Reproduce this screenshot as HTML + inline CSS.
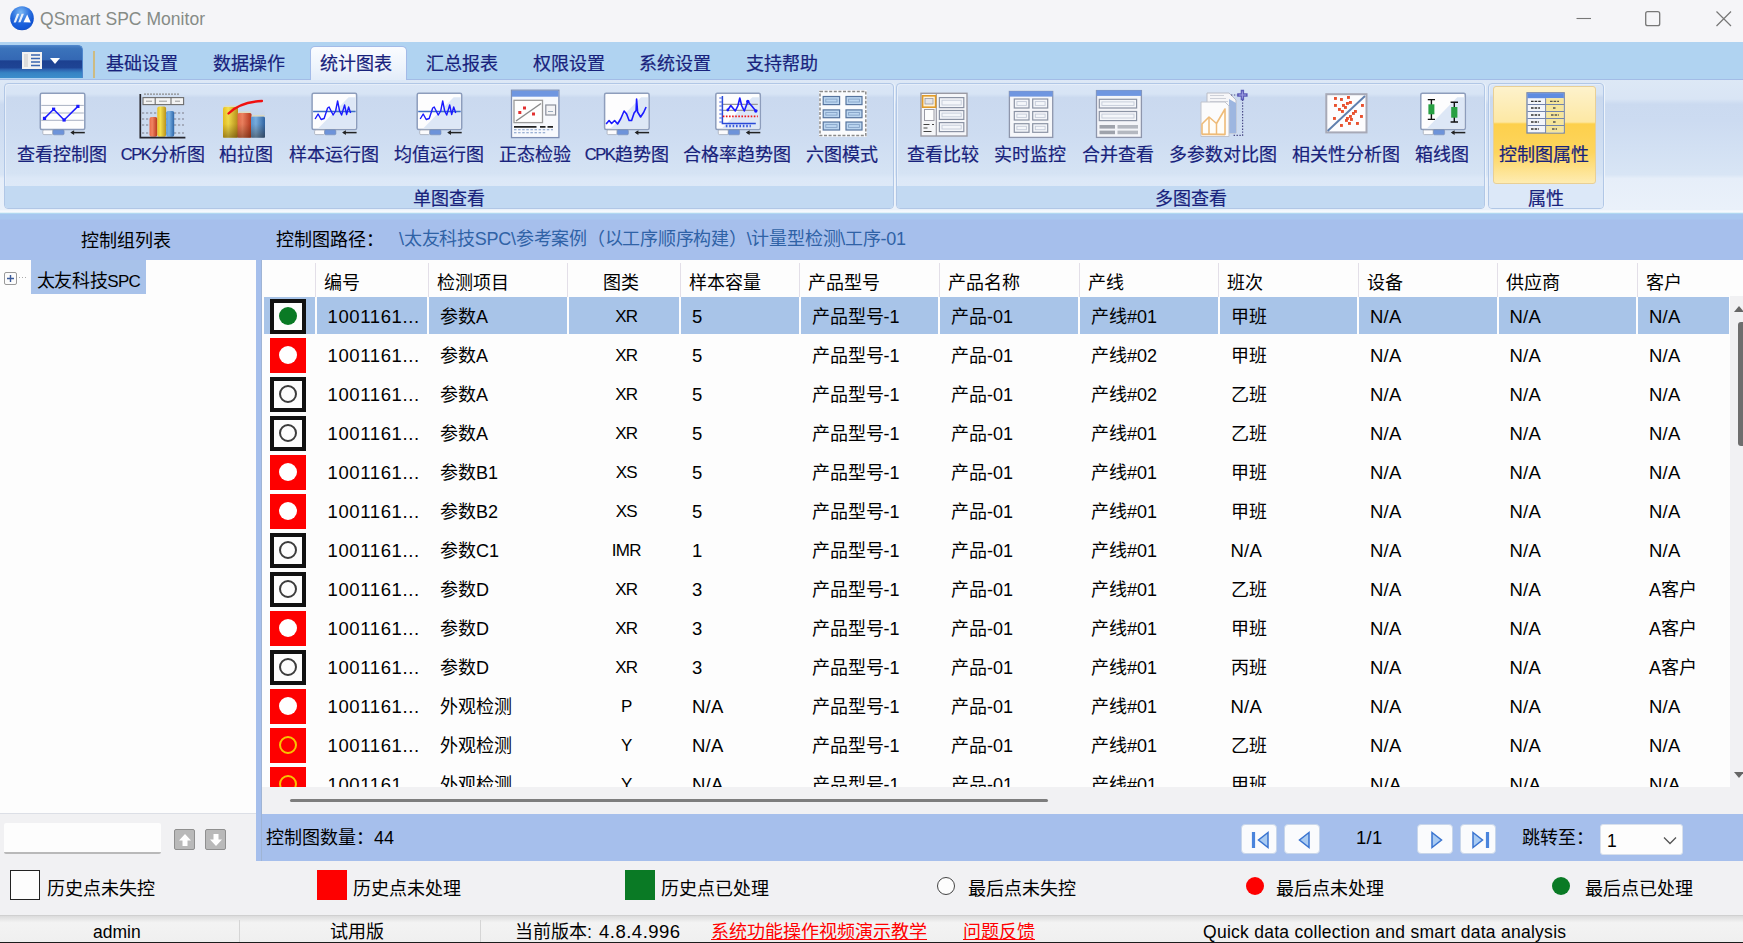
<!DOCTYPE html>
<html lang="zh-CN"><head><meta charset="utf-8"><title>QSmart SPC Monitor</title>
<style>
html,body{margin:0;padding:0}
body{width:1743px;height:943px;position:relative;overflow:hidden;background:#f1f1f3;font-family:"Liberation Sans",sans-serif;font-size:18px;color:#000}
div,span,a{position:absolute;white-space:nowrap;box-sizing:border-box}
svg{position:absolute;overflow:visible}
#title{left:0;top:0;width:1743px;height:42px;background:#f5f5f8}
#title .t{left:40px;top:9px;font-size:17.5px;color:#868b86;letter-spacing:0.04px}
#tabs{left:0;top:42px;width:1743px;height:38px;background:#b0d3f1;border-bottom:1px solid #a3bce6}
.tab{top:9px;height:27px;line-height:27px;font-size:18px;color:#18227c;-webkit-text-stroke:0.2px #18227c;text-align:center}
#tabsel{left:309.5px;top:3.5px;width:97.5px;height:34.5px;background:linear-gradient(#fafcff,#eef4fc 60%,#e2ecf9);border:1.5px solid #a3bbe8;border-bottom:none;border-radius:5px 5px 0 0}
#appbtn{left:0;top:3px;width:83px;height:33px;border-radius:0 5px 0 0;background:linear-gradient(#4a80c4 0%,#3b73bb 8%,#3468b4 44%,#1c4090 46%,#1e4494 68%,#2a5cac 72%,#3684c4 84%,#3c8ecc 100%);border:1px solid #4f86cc;border-left:none;border-bottom:none}
#ribbon{left:0;top:80px;width:1743px;height:135px;background:linear-gradient(#dde8f6 0%,#d9e5f5 14%,#cbdaf0 18%,#ccdbf1 30%,#d8e5f5 70%,#e6eef9 73%,#eaf1fa 96%,#f6f9fd 97%,#f6f9fd 98%,#b4def2 98.5%,#a9c5ec 100%)}
.grp{top:3px;height:126px;border:1px solid #b1c7e6;border-radius:4px;box-shadow:1px 0 0 #eef4fb, inset 1px 1px 0 #e6eef9;background:linear-gradient(#dae6f6 0%,#d7e4f5 8%,#cad9ef 11%,#cddcf1 40%,#d5e3f4 72%,#dce8f7 76%,#e0eaf8 100%)}
.grp .gl{left:0;right:0;bottom:-1.5px;height:21px;line-height:21px;text-align:center;color:#18227c;-webkit-text-stroke:0.2px #18227c;font-size:18px}
.rb{top:0;height:100px;text-align:center;color:#18227c;-webkit-text-stroke:0.2px #18227c;font-size:18px;letter-spacing:0}
.rb i{font-style:normal;font-size:16.5px;letter-spacing:-1.5px;position:relative;top:-1px;margin-right:1px}
.rb .lb{left:-60px;right:-60px;top:58.5px;height:24px;line-height:24px;text-align:center}
#pathbar{left:0;top:214px;width:1743px;height:46.5px;background:linear-gradient(#a8c6ef 0,#a8c6ef 5px,#a6bfec 6px,#a6bfec 100%);border-bottom:1px solid #a9abb6}
#left{left:0;top:260px;width:256px;height:553px;background:#fdfdfd}
#vsplit{left:256px;top:260px;width:6px;height:601px;background:#a6bfec;border-right:1px solid #9fb4d4}
#grid{left:262px;top:260px;width:1481px;height:553px;background:#fdfdfd;overflow:hidden}
.hd{top:9.5px;height:26px;line-height:26px;font-size:18px}
.hs{top:3px;width:1px;height:34px;background:#e3dfe8}
.row{left:0;width:1481px;height:39px}
.row.sel .c{background:#a8c4e8}
.c{top:1px;height:37px;line-height:41.5px;font-size:18px;padding-left:11px;overflow:hidden}
.c.l{font-size:18.5px;letter-spacing:0.2px;line-height:39.5px}
.c.id{font-size:18.5px;letter-spacing:0.62px;line-height:39.5px}
.c.ty{font-size:17px;letter-spacing:-0.8px;line-height:39.5px}
.c.ctr{padding-left:5px;text-align:center}
.ind{left:7.6px;top:2.5px;width:36.2px;height:35.5px}
.ind.bk{border:4px solid #111;background:#fdfdfd}
.ind.rd{background:#fe0000}
.dot{left:50%;top:50%;width:18px;height:18px;margin:-9px 0 0 -9px;border-radius:50%}
#hscroll{left:262px;top:787px;width:1481px;height:27px;background:#f1f1f3}
#countbar{left:262px;top:813.5px;width:1481px;height:47.5px;background:#a6bfec}
#leftbot{left:0;top:813px;width:256px;height:48px;background:#f1f1f3;border-top:1px solid #dcdfe6}
#legend{left:0;top:861px;width:1743px;height:54px;background:#f1f1f3}
#legend .lt{top:14.5px;height:26px;line-height:26px;font-size:18px}
#status{left:0;top:915px;width:1743px;height:28px;background:linear-gradient(#dcdcdc,#f3f3f3 25%,#efefef);border-top:1px solid #d0d0d0}
#status .st{top:4px;height:24px;line-height:24px;font-size:18px}
#status .la{font-size:17.5px}
.pg{top:10px;width:36px;height:30px;background:#fafbfd;border:1px solid #c8d6ea;border-radius:4px}
</style></head>
<body>
<div id="title"><svg style="left:10px;top:5.6px" width="24" height="24.4" viewBox="0 0 24 24.4"><defs><radialGradient id="ag" cx="45%" cy="25%" r="80%"><stop offset="0" stop-color="#7ab8f4"/><stop offset="0.45" stop-color="#2f74e0"/><stop offset="0.8" stop-color="#0d4fd0"/><stop offset="1" stop-color="#0a3aa8"/></radialGradient></defs><ellipse cx="12" cy="12.2" rx="11.8" ry="12" fill="url(#ag)"/><path d="M3.6 16.6L7 7.8h2.3L5.9 16.6zM8.2 16.6L11.6 7.8h2.3L10.5 16.6z" fill="#e8f0fc"/><path d="M13.4 16.6L17.2 8.6l3.6 8z" fill="#fdfdff"/><path d="M1.5 17.5Q12 14.5 22.5 17.5Q21 23.8 12 24Q3 23.8 1.5 17.5z" fill="#1a62e0" opacity="0.55"/></svg><span class="t">QSmart SPC Monitor</span><svg style="left:1570px;top:5px" width="170" height="30"><path d="M6.5 13.5h14.5" stroke="#777" stroke-width="1.1" fill="none"/><rect x="75.7" y="6.7" width="14" height="14" rx="2" fill="none" stroke="#777" stroke-width="1.3"/><path d="M146.5 6.5l14.5 14.5M161 6.5l-14.5 14.5" stroke="#777" stroke-width="1.2" fill="none"/></svg></div>
<div id="tabs"><div id="appbtn"><svg style="left:22px;top:6px" width="50" height="20"><rect x="0" y="0" width="20" height="17" fill="#f2f2f2"/><path d="M9 3h9M9 6.5h9M9 10h9M9 13.5h9" stroke="#3a66b0" stroke-width="1.6"/><rect x="2" y="2" width="4" height="13" fill="#dcdcdc"/><path d="M28 6h10l-5 6z" fill="#fff"/></svg></div><div style="left:93px;top:9px;width:2px;height:27px;background:#cdbb82"></div><div id="tabsel"></div><span class="tab" style="left:92px;width:100px">基础设置</span><span class="tab" style="left:199px;width:100px">数据操作</span><span class="tab" style="left:306px;width:100px">统计图表</span><span class="tab" style="left:412px;width:100px">汇总报表</span><span class="tab" style="left:519px;width:100px">权限设置</span><span class="tab" style="left:625px;width:100px">系统设置</span><span class="tab" style="left:732px;width:100px">支持帮助</span></div>
<div id="ribbon"><div class="grp" style="left:4px;width:890px"><div style="left:0;right:0;bottom:0;height:22px;background:#c2d9f2;border-radius:0 0 3px 3px"></div><div class="rb" style="left:37px;width:40px"><span class="lb">查看控制图</span></div><div class="rb" style="left:138px;width:40px"><span class="lb"><i>CPK</i>分析图</span></div><div class="rb" style="left:221px;width:40px"><span class="lb">柏拉图</span></div><div class="rb" style="left:309px;width:40px"><span class="lb">样本运行图</span></div><div class="rb" style="left:414px;width:40px"><span class="lb">均值运行图</span></div><div class="rb" style="left:510px;width:40px"><span class="lb">正态检验</span></div><div class="rb" style="left:602px;width:40px"><span class="lb"><i>CPK</i>趋势图</span></div><div class="rb" style="left:712px;width:40px"><span class="lb">合格率趋势图</span></div><div class="rb" style="left:817px;width:40px"><span class="lb">六图模式</span></div><span class="gl">单图查看</span></div><div class="grp" style="left:896px;width:589px"><div style="left:0;right:0;bottom:0;height:22px;background:#c2d9f2;border-radius:0 0 3px 3px"></div><div class="rb" style="left:26px;width:40px"><span class="lb">查看比较</span></div><div class="rb" style="left:113px;width:40px"><span class="lb">实时监控</span></div><div class="rb" style="left:201px;width:40px"><span class="lb">合并查看</span></div><div class="rb" style="left:306px;width:40px"><span class="lb">多参数对比图</span></div><div class="rb" style="left:429px;width:40px"><span class="lb">相关性分析图</span></div><div class="rb" style="left:525px;width:40px"><span class="lb">箱线图</span></div><span class="gl">多图查看</span></div><div class="grp" style="left:1488px;width:116px"><div style="left:0;right:0;bottom:0;height:22px;background:#dce8f8;border-radius:0 0 3px 3px"></div><div style="left:4px;top:2px;width:103px;height:97.5px;border-radius:3px;border:1px solid #e8cf96;background:linear-gradient(#fdf2cc 0%,#fde8a4 36.5%,#fdd04c 38.5%,#fdd55e 68%,#feecb2 100%)"></div><div class="rb" style="left:35px;width:40px"><span class="lb">控制图属性</span></div><span class="gl">属性</span></div></div>
<svg style="left:0;top:0" width="1743" height="220" viewBox="0 0 1743 220"><g transform="translate(0,0)"><path d="M144 94.2H180" stroke="#8a8a8a" stroke-width="1.3" stroke-dasharray="2 1"/><rect x="143" y="97.6" width="40.6" height="7" fill="#f3f3f3" stroke="#6e6e6e" stroke-width="1.1"/><path d="M155.2 97.6v7M171 97.6v7" stroke="#6e6e6e" stroke-width="1.1"/><path d="M146 101.2h6M159 101.2h8M175 101.2h5" stroke="#999" stroke-width="1"/><path d="M142 113H184M142 119H184M142 125H184M142 133H184" stroke="#7d7d88" stroke-width="1.1" stroke-dasharray="2.2 1.8"/><defs><linearGradient id="gr" x1="0" x2="1"><stop offset="0" stop-color="#e86a48"/><stop offset="0.35" stop-color="#f08462"/><stop offset="1" stop-color="#b8361c"/></linearGradient><linearGradient id="gy" x1="0" x2="1"><stop offset="0" stop-color="#e8c020"/><stop offset="0.35" stop-color="#f6e04c"/><stop offset="1" stop-color="#b8901a"/></linearGradient><linearGradient id="gb" x1="0" x2="1"><stop offset="0" stop-color="#5a98d8"/><stop offset="0.35" stop-color="#7ab2e6"/><stop offset="1" stop-color="#2e66a8"/></linearGradient></defs><rect x="149.5" y="117" width="7.8" height="19.8" rx="2" fill="url(#gr)"/><rect x="157.3" y="106.5" width="8.8" height="30.3" rx="2" fill="url(#gy)"/><rect x="166.2" y="111" width="8" height="25.8" rx="2" fill="url(#gb)"/><path d="M140.3 94V137.6H185.4" fill="none" stroke="#26262e" stroke-width="1.7"/></g><g transform="translate(40.3,0)"><rect x="0" y="93.3" width="44.5" height="36.2" rx="1.5" fill="#fdfdfe" stroke="#8d9dbc" stroke-width="1.5"/><path d="M1 105.4H43.5M1 113H43.5M1 120.3H43.5" stroke="#a9b1c2" stroke-width="1"/><path d="M4.2 118.4 L13.3 109.2 L23.8 120 L37.6 106.4" fill="none" stroke="#1a1aff" stroke-width="1.5"/><rect x="2.6" y="116.8" width="3.2" height="3.2" fill="#1a1aff"/><rect x="11.7" y="107.6" width="3.2" height="3.2" fill="#1a1aff"/><rect x="22.2" y="118.4" width="3.2" height="3.2" fill="#1a1aff"/><rect x="36" y="104.8" width="3.2" height="3.2" fill="#1a1aff"/><rect x="2.5" y="130" width="10" height="4.6" rx="1.2" fill="#fbfbfd" stroke="#a4abb8" stroke-width="0.8"/><rect x="12.6" y="129.8" width="11.2" height="5" rx="1.2" fill="#6d93da" stroke="#7b8db0" stroke-width="0.6"/><path d="M31.5 132.6H44.5" stroke="#222" stroke-width="1.5"/><path d="M30 132.6l3.8-2.3v4.6z" fill="#222"/></g><g transform="translate(0,0)"><rect x="223" y="107" width="15" height="30.7" rx="1.5" fill="url(#gy)"/><rect x="237.5" y="113" width="14" height="24.7" rx="1.5" fill="url(#gr)"/><rect x="251" y="116.5" width="14" height="21.2" rx="1.5" fill="url(#gb)"/><path d="M223 107l2-1.6h12l1 1.6zM237.5 113l2-1.4h11l1 1.4zM251 116.5l2-1.4h11l1 1.4z" fill="#f0e0a0" opacity="0.55"/><defs><linearGradient id="gd" x1="0" y1="0" x2="0" y2="1"><stop offset="0" stop-color="#402000" stop-opacity="0"/><stop offset="0.55" stop-color="#402000" stop-opacity="0.05"/><stop offset="1" stop-color="#301800" stop-opacity="0.42"/></linearGradient></defs><rect x="223" y="107" width="42" height="30.7" fill="url(#gd)"/><path d="M228.5 113.5Q240 102 262 101" fill="none" stroke="#f01010" stroke-width="2.3" stroke-linecap="round"/></g><g transform="translate(312.1,0)"><rect x="0" y="93.3" width="44.5" height="36.2" rx="1.5" fill="#fdfdfe" stroke="#8d9dbc" stroke-width="1.5"/><path d="M43.5 97.3 L43.5 128.5 L6 128.5 L36.5 97.3 Z" fill="#dde7f6"/><path d="M1 111.5H43.5" stroke="#3c6ec4" stroke-width="1.3"/><path d="M3 119 L6 114 L9 119.5 L12 118.5 L15.5 108 L17 107 L21 115 L23.5 111 L25.5 101 L27.5 111 L29.5 115 L32.5 105 L34.5 114.5 L36.5 107 L38.5 113" fill="none" stroke="#1a1aff" stroke-width="1.4" stroke-linejoin="round"/><rect x="2.5" y="130" width="10" height="4.6" rx="1.2" fill="#fbfbfd" stroke="#a4abb8" stroke-width="0.8"/><rect x="12.6" y="129.8" width="11.2" height="5" rx="1.2" fill="#6d93da" stroke="#7b8db0" stroke-width="0.6"/><path d="M31.5 132.6H44.5" stroke="#222" stroke-width="1.5"/><path d="M30 132.6l3.8-2.3v4.6z" fill="#222"/></g><g transform="translate(417.2,0)"><rect x="0" y="93.3" width="44.5" height="36.2" rx="1.5" fill="#fdfdfe" stroke="#8d9dbc" stroke-width="1.5"/><path d="M43.5 97.3 L43.5 128.5 L6 128.5 L36.5 97.3 Z" fill="#dde7f6"/><path d="M1 111.5H43.5" stroke="#3c6ec4" stroke-width="1.3"/><path d="M3 119 L6 114 L9 119.5 L12 118.5 L15.5 108 L17 107 L21 115 L23.5 111 L25.5 101 L27.5 111 L29.5 115 L32.5 105 L34.5 114.5 L36.5 107 L38.5 113" fill="none" stroke="#1a1aff" stroke-width="1.4" stroke-linejoin="round"/><rect x="2.5" y="130" width="10" height="4.6" rx="1.2" fill="#fbfbfd" stroke="#a4abb8" stroke-width="0.8"/><rect x="12.6" y="129.8" width="11.2" height="5" rx="1.2" fill="#6d93da" stroke="#7b8db0" stroke-width="0.6"/><path d="M31.5 132.6H44.5" stroke="#222" stroke-width="1.5"/><path d="M30 132.6l3.8-2.3v4.6z" fill="#222"/></g><g transform="translate(0,0)"><rect x="511.5" y="90.2" width="47.4" height="47.4" fill="#f7f9fd" stroke="#7e8fb4" stroke-width="1.3"/><rect x="512" y="90.7" width="46.4" height="6" fill="#6f96e0"/><rect x="514" y="100.3" width="28.5" height="22.3" fill="#fefefe" stroke="#9a9a9a" stroke-width="1.3"/><path d="M516 121L541 103.5" stroke="#8a8a8a" stroke-width="1.5"/><rect x="523" y="106.5" width="3" height="3" fill="#e23030"/><rect x="518.3" y="111" width="3" height="3" fill="#e23030"/><rect x="532" y="112.5" width="3" height="3" fill="#e23030"/><rect x="545.8" y="105" width="9.8" height="10" fill="#f4f4f6" stroke="#8a8f9c" stroke-width="1.2"/><path d="M548 111.5h5" stroke="#9ab" stroke-width="1"/><path d="M514 126.8H536.5M540 126.8H545.5M547.5 126.8H553" stroke="#222" stroke-width="1.7"/><path d="M514 129.8H553M514 132.8H546" stroke="#7f9bc8" stroke-width="1.1" stroke-dasharray="2.5 1.6"/></g><g transform="translate(604.6,0)"><rect x="0" y="93.3" width="44.5" height="36.2" rx="1.5" fill="#fdfdfe" stroke="#8d9dbc" stroke-width="1.5"/><path d="M43.5 97.3 L43.5 128.5 L6 128.5 L36.5 97.3 Z" fill="#dde7f6"/><path d="M1.5 124 L4.5 120.5 L7 123.5 L10 120.5 L13 124 L16 119 L19.5 111 L22 114 L24.5 120.5 L27 120.5 L29.5 113 L31.5 110.5 L32 99 L33 112 L36 117 L39 112.5 L41.5 107" fill="none" stroke="#1a1aff" stroke-width="1.6" stroke-linejoin="round"/><rect x="2.5" y="130" width="10" height="4.6" rx="1.2" fill="#fbfbfd" stroke="#a4abb8" stroke-width="0.8"/><rect x="12.6" y="129.8" width="11.2" height="5" rx="1.2" fill="#6d93da" stroke="#7b8db0" stroke-width="0.6"/><path d="M31.5 132.6H44.5" stroke="#222" stroke-width="1.5"/><path d="M30 132.6l3.8-2.3v4.6z" fill="#222"/></g><g transform="translate(715.8,0)"><rect x="0" y="93.3" width="44.5" height="36.2" rx="1.5" fill="#fdfdfe" stroke="#8d9dbc" stroke-width="1.5"/><path d="M43.5 97.3 L43.5 128.5 L6 128.5 L36.5 97.3 Z" fill="#dde7f6"/><path d="M6 104.4H42M6 110.3H42" stroke="#9a9a9a" stroke-width="1.2"/><path d="M6.6 96V123.6H40" fill="none" stroke="#2a4ad8" stroke-width="1.5"/><path d="M3.5 98H6M3.5 102H6M3.5 106H6M3.5 110H6M3.5 114H6M3.5 118H6M3.5 122H6" stroke="#3a5ae0" stroke-width="1.1"/><path d="M10 126H35" stroke="#3a5ae0" stroke-width="2.6" stroke-dasharray="1.6 1.8"/><path d="M12 110 L15 105.5 L19.5 111 L22 106 L24 98 L26 106 L28.5 111 L32 101.5 L36 106 L40 111" fill="none" stroke="#1a1aff" stroke-width="1.6" stroke-linejoin="round"/><circle cx="32" cy="101.5" r="1.7" fill="#1a1aff"/><circle cx="40" cy="111" r="1.7" fill="#1a1aff"/><circle cx="12" cy="110" r="1.4" fill="#1a1aff"/><path d="M7 116.4H42" stroke="#f01818" stroke-width="1.8" stroke-dasharray="1.6 1.5"/><rect x="2.5" y="130" width="10" height="4.6" rx="1.2" fill="#fbfbfd" stroke="#a4abb8" stroke-width="0.8"/><rect x="12.6" y="129.8" width="11.2" height="5" rx="1.2" fill="#6d93da" stroke="#7b8db0" stroke-width="0.6"/><path d="M31.5 132.6H44.5" stroke="#222" stroke-width="1.5"/><path d="M30 132.6l3.8-2.3v4.6z" fill="#222"/></g><g transform="translate(0,0)"><rect x="819" y="90.2" width="47.8" height="46.6" fill="#fafbfd"/><rect x="820" y="91.4" width="45.8" height="44.2" fill="none" stroke="#8a8a8a" stroke-width="1.5" stroke-dasharray="3 1.6"/><rect x="823.2" y="96.5" width="16.4" height="8.1" fill="#bcd6f0" stroke="#56749e" stroke-width="1.2"/><rect x="825.8" y="99.1" width="11.2" height="2.9" fill="none" stroke="#86a4c8" stroke-width="0.9"/><rect x="823.2" y="109.9" width="16.4" height="7.8" fill="#bcd6f0" stroke="#56749e" stroke-width="1.2"/><rect x="825.8" y="112.5" width="11.2" height="2.6" fill="none" stroke="#86a4c8" stroke-width="0.9"/><rect x="823.2" y="122" width="16.4" height="8" fill="#bcd6f0" stroke="#56749e" stroke-width="1.2"/><rect x="825.8" y="124.6" width="11.2" height="2.8" fill="none" stroke="#86a4c8" stroke-width="0.9"/><rect x="846" y="96.5" width="16" height="8.1" fill="#bcd6f0" stroke="#56749e" stroke-width="1.2"/><rect x="848.6" y="99.1" width="10.8" height="2.9" fill="none" stroke="#86a4c8" stroke-width="0.9"/><rect x="846" y="109.9" width="16" height="7.8" fill="#bcd6f0" stroke="#56749e" stroke-width="1.2"/><rect x="848.6" y="112.5" width="10.8" height="2.6" fill="none" stroke="#86a4c8" stroke-width="0.9"/><rect x="846" y="122" width="16" height="8" fill="#bcd6f0" stroke="#56749e" stroke-width="1.2"/><rect x="848.6" y="124.6" width="10.8" height="2.8" fill="none" stroke="#86a4c8" stroke-width="0.9"/></g><g transform="translate(0,0)"><rect x="921" y="93.3" width="46" height="42.7" fill="#f5f6f9" stroke="#9a9aa4" stroke-width="1.4"/><path d="M936.3 93.5V136" stroke="#9a9aa4" stroke-width="1.2"/><rect x="922.6" y="95.8" width="13" height="11.4" fill="#fdf2dc" stroke="#e09a28" stroke-width="1.6"/><rect x="925" y="98.5" width="8" height="5.5" fill="#e4e4e8" stroke="#9a9aa4" stroke-width="0.8"/><rect x="924.5" y="109.5" width="9.5" height="11" fill="#fdfdfd" stroke="#9a9aa4" stroke-width="1"/><path d="M923.5 124.5h6M932 124.5h2M923.5 128h4M923.5 131.5h8" stroke="#444" stroke-width="1.2"/><rect x="939.4" y="97.6" width="24.4" height="10" fill="#f4f6fa" stroke="#8b93a4" stroke-width="1.2"/><rect x="942" y="100.2" width="19.2" height="4.8" fill="none" stroke="#c3cad8" stroke-width="0.9"/><rect x="939.4" y="110.5" width="24.4" height="8.9" fill="#f4f6fa" stroke="#8b93a4" stroke-width="1.2"/><rect x="942" y="113.1" width="19.2" height="3.7" fill="none" stroke="#c3cad8" stroke-width="0.9"/><rect x="939.4" y="122.6" width="24.4" height="9" fill="#f4f6fa" stroke="#8b93a4" stroke-width="1.2"/><rect x="942" y="125.2" width="19.2" height="3.8" fill="none" stroke="#c3cad8" stroke-width="0.9"/></g><g transform="translate(0,0)"><rect x="1009.4" y="91.5" width="43.3" height="45.9" fill="#f6f7fa" stroke="#8e96ac" stroke-width="1.3"/><rect x="1009.4" y="91.2" width="43.3" height="5.4" fill="#6f96e0"/><rect x="1014.3" y="99" width="14.7" height="9" fill="#f4f6fa" stroke="#8b93a4" stroke-width="1.2"/><rect x="1016.9" y="101.6" width="9.5" height="3.8" fill="none" stroke="#c3cad8" stroke-width="0.9"/><rect x="1014.3" y="111.5" width="14.7" height="8.5" fill="#f4f6fa" stroke="#8b93a4" stroke-width="1.2"/><rect x="1016.9" y="114.1" width="9.5" height="3.3" fill="none" stroke="#c3cad8" stroke-width="0.9"/><rect x="1014.3" y="123.7" width="14.7" height="8.6" fill="#f4f6fa" stroke="#8b93a4" stroke-width="1.2"/><rect x="1016.9" y="126.3" width="9.5" height="3.4" fill="none" stroke="#c3cad8" stroke-width="0.9"/><rect x="1032.7" y="99" width="15" height="9" fill="#f4f6fa" stroke="#8b93a4" stroke-width="1.2"/><rect x="1035.3" y="101.6" width="9.8" height="3.8" fill="none" stroke="#c3cad8" stroke-width="0.9"/><rect x="1032.7" y="111.5" width="15" height="8.5" fill="#f4f6fa" stroke="#8b93a4" stroke-width="1.2"/><rect x="1035.3" y="114.1" width="9.8" height="3.3" fill="none" stroke="#c3cad8" stroke-width="0.9"/><rect x="1032.7" y="123.7" width="15" height="8.6" fill="#f4f6fa" stroke="#8b93a4" stroke-width="1.2"/><rect x="1035.3" y="126.3" width="9.8" height="3.4" fill="none" stroke="#c3cad8" stroke-width="0.9"/></g><g transform="translate(0,0)"><rect x="1096.5" y="90.6" width="44.9" height="46.8" fill="#f4f5f9" stroke="#8e96ac" stroke-width="1.3"/><rect x="1096.5" y="90.3" width="44.9" height="5.6" fill="#6f96e0"/><rect x="1099.3" y="99.3" width="37.3" height="8.7" fill="#f4f6fa" stroke="#8b93a4" stroke-width="1.2"/><rect x="1101.9" y="101.9" width="32.1" height="3.5" fill="none" stroke="#c3cad8" stroke-width="0.9"/><rect x="1099.3" y="111.5" width="37.3" height="9.1" fill="#f4f6fa" stroke="#8b93a4" stroke-width="1.2"/><rect x="1101.9" y="114.1" width="32.1" height="3.9" fill="none" stroke="#c3cad8" stroke-width="0.9"/><rect x="1099.5" y="125" width="15.5" height="3.6" fill="#9fa3ac"/><rect x="1117.5" y="125" width="20.5" height="3.6" fill="#b4b8c0"/><rect x="1099.5" y="130.6" width="15.5" height="3.6" fill="#9fa3ac"/><rect x="1117.5" y="130.6" width="20.5" height="3.6" fill="#b4b8c0"/></g><g transform="translate(0,0)"><path d="M1207 93h22l7 7v33h-29z" fill="#f6f6f8" stroke="#b9bcc6" stroke-width="1"/><path d="M1210 95.5h14M1210 98.5h16M1210 101.5h18" stroke="#c8ccd4" stroke-width="0.9"/><path d="M1229 99v34h7v-30z" fill="#9db6e0"/><path d="M1201 102h24l4 4v30.5h-28z" fill="#fbfbfc" stroke="#c0c3cc" stroke-width="1"/><path d="M1202 134V124l7-7 7.5 6.5 8.5-14.5v25.5z" fill="#fffdf8" stroke="#eebb78" stroke-width="1.6" stroke-linejoin="round"/><path d="M1209 117v17M1216.5 123.5v11M1202 134.5h23" stroke="#eebb78" stroke-width="1.5"/><path d="M1231 95H1238M1242.6 99.5V135.4H1233" fill="none" stroke="#4a4a86" stroke-width="1.2" stroke-dasharray="1.4 1.5"/><path d="M1242.4 89.8v10.4M1237.2 95h10.4" stroke="#5c5cb8" stroke-width="3.4"/><path d="M1242.4 91.4v7.2M1238.8 95h7.2" stroke="#9c9ce0" stroke-width="1"/></g><g transform="translate(0,0)"><rect x="1326.3" y="94.2" width="40.2" height="38.2" fill="#fcfcfe" stroke="#a7a9b6" stroke-width="2"/><path d="M1327.6 131L1365 96" stroke="#5f7fae" stroke-width="1.9"/><rect x="1334" y="97" width="2.9" height="2.9" fill="#e8502e"/><rect x="1340" y="98" width="2.9" height="2.9" fill="#e8502e"/><rect x="1347" y="96" width="2.9" height="2.9" fill="#e8502e"/><rect x="1334" y="104" width="2.9" height="2.9" fill="#e8502e"/><rect x="1342" y="104" width="2.9" height="2.9" fill="#e8502e"/><rect x="1346" y="102" width="2.9" height="2.9" fill="#e8502e"/><rect x="1349" y="101" width="2.9" height="2.9" fill="#e8502e"/><rect x="1338" y="108" width="2.9" height="2.9" fill="#e8502e"/><rect x="1341" y="110" width="2.9" height="2.9" fill="#e8502e"/><rect x="1344" y="106" width="2.9" height="2.9" fill="#e8502e"/><rect x="1361" y="104" width="2.9" height="2.9" fill="#e8502e"/><rect x="1333" y="117" width="2.9" height="2.9" fill="#e8502e"/><rect x="1346" y="117" width="2.9" height="2.9" fill="#e8502e"/><rect x="1349" y="115" width="2.9" height="2.9" fill="#e8502e"/><rect x="1352" y="112" width="2.9" height="2.9" fill="#e8502e"/><rect x="1354" y="110" width="2.9" height="2.9" fill="#e8502e"/><rect x="1360" y="115" width="2.9" height="2.9" fill="#e8502e"/><rect x="1340" y="124" width="2.9" height="2.9" fill="#e8502e"/><rect x="1348" y="122" width="2.9" height="2.9" fill="#e8502e"/><rect x="1356" y="122" width="2.9" height="2.9" fill="#e8502e"/><rect x="1345" y="119" width="2.9" height="2.9" fill="#e8502e"/><rect x="1350" y="118" width="2.9" height="2.9" fill="#e8502e"/></g><g transform="translate(1420.8,0)"><rect x="0" y="93.3" width="44.5" height="36.2" rx="1.5" fill="#fdfdfe" stroke="#8d9dbc" stroke-width="1.5"/><path d="M43.5 97.3 L43.5 128.5 L6 128.5 L36.5 97.3 Z" fill="#dde7f6"/><path d="M10.6 99.6V119.4M7 99.6H14.2M7 119.4H14.2" stroke="#111" stroke-width="1.4"/><rect x="7.6" y="104.3" width="6" height="10" fill="#27a043"/><path d="M33.5 102.2V122M29.8 102.2H37.2M29.8 122H37.2" stroke="#111" stroke-width="1.4"/><rect x="30.4" y="107" width="6.2" height="10.7" fill="#27a043"/><rect x="2.5" y="130" width="10" height="4.6" rx="1.2" fill="#fbfbfd" stroke="#a4abb8" stroke-width="0.8"/><rect x="12.6" y="129.8" width="11.2" height="5" rx="1.2" fill="#6d93da" stroke="#7b8db0" stroke-width="0.6"/><path d="M31.5 132.6H44.5" stroke="#222" stroke-width="1.5"/><path d="M30 132.6l3.8-2.3v4.6z" fill="#222"/></g><g transform="translate(0,0)"><rect x="1527" y="92.8" width="37.2" height="40.2" fill="#f3f5fa" stroke="#7384aa" stroke-width="1.3"/><rect x="1527.4" y="93.2" width="36.4" height="5" fill="#5f8ce0"/><rect x="1546" y="98.2" width="17.6" height="34.3" fill="#f6e59a"/><path d="M1545.6 98.2V133M1527.5 104.5H1564M1527.5 111.5H1564M1527.5 118.5H1564M1527.5 125.5H1564" stroke="#7384aa" stroke-width="1"/><path d="M1531 101.4h10M1531 108h9M1531 115h9M1531 122h8M1531 129h8" stroke="#333" stroke-width="1.3" stroke-dasharray="2.6 1"/><path d="M1550 101.4h9M1553 108h2.5M1551 115h8M1553 122h3M1552 129h5" stroke="#555" stroke-width="1.3" stroke-dasharray="2.6 1"/></g></svg>
<div id="pathbar"><span style="left:81px;top:14px;font-size:18px;line-height:26px">控制组列表</span><span style="left:276px;top:13px;font-size:18px;line-height:26px">控制图路径：</span><span style="left:399px;top:12px;font-size:18px;line-height:26px;color:#2f62a6;letter-spacing:-0.24px">\太友科技SPC\参考案例（以工序顺序构建）\计量型检测\工序-01</span></div>
<div id="left"><svg style="left:3px;top:11px" width="24" height="16"><rect x="1.5" y="1.5" width="12" height="12" rx="1.5" fill="#fcfcfc" stroke="#9a9a9a"/><path d="M4 7.5h7M7.5 4v7" stroke="#3b5a9a" stroke-width="1.4"/><path d="M16 6.5h1M19 6.5h1M22 6.5h1" stroke="#aaa"/></svg><div style="left:31px;top:0px;width:115px;height:34px;background:#a8c2ea"></div><span style="left:36.5px;top:7.5px;font-size:18px;line-height:26px;letter-spacing:-0.3px">太友科技<i style="font-style:normal;font-size:17px;letter-spacing:-0.7px">SPC</i></span></div>
<div id="vsplit"></div>
<div id="grid"><span class="hd" style="left:62px">编号</span><div class="hs" style="left:53px"></div><span class="hd" style="left:174.5px">检测项目</span><div class="hs" style="left:165.5px"></div><span class="hd" style="left:305.5px;width:106.5px;text-align:center">图类</span><div class="hs" style="left:305px"></div><span class="hd" style="left:426.5px">样本容量</span><div class="hs" style="left:417.5px"></div><span class="hd" style="left:546.1px">产品型号</span><div class="hs" style="left:537.1px"></div><span class="hd" style="left:685.5px">产品名称</span><div class="hs" style="left:676.5px"></div><span class="hd" style="left:825.5px">产线</span><div class="hs" style="left:816.5px"></div><span class="hd" style="left:965px">班次</span><div class="hs" style="left:956px"></div><span class="hd" style="left:1104.5px">设备</span><div class="hs" style="left:1095.5px"></div><span class="hd" style="left:1244px">供应商</span><div class="hs" style="left:1235px"></div><span class="hd" style="left:1383.5px">客户</span><div class="hs" style="left:1374.5px"></div><div class="row sel" style="top:36px"><div class="c" style="left:2px;width:50.5px"></div><div class="c id" style="left:54.5px;width:110.5px">1001161...</div><div class="c" style="left:167px;width:137.5px">参数A</div><div class="c ctr ty" style="left:306.5px;width:110.5px">XR</div><div class="c l" style="left:419px;width:117.6px">5</div><div class="c" style="left:538.6px;width:137.4px">产品型号-1</div><div class="c" style="left:678px;width:138px">产品-01</div><div class="c" style="left:818px;width:137.5px">产线#01</div><div class="c" style="left:957.5px;width:137.5px">甲班</div><div class="c l" style="left:1097px;width:137.5px">N/A</div><div class="c l" style="left:1236.5px;width:137.5px">N/A</div><div class="c l" style="left:1376px;width:90.5px">N/A</div><div class="ind bk"><div class="dot" style="background:#0a7a25"></div></div></div><div class="row" style="top:75px"><div class="c" style="left:2px;width:50.5px"></div><div class="c id" style="left:54.5px;width:110.5px">1001161...</div><div class="c" style="left:167px;width:137.5px">参数A</div><div class="c ctr ty" style="left:306.5px;width:110.5px">XR</div><div class="c l" style="left:419px;width:117.6px">5</div><div class="c" style="left:538.6px;width:137.4px">产品型号-1</div><div class="c" style="left:678px;width:138px">产品-01</div><div class="c" style="left:818px;width:137.5px">产线#02</div><div class="c" style="left:957.5px;width:137.5px">甲班</div><div class="c l" style="left:1097px;width:137.5px">N/A</div><div class="c l" style="left:1236.5px;width:137.5px">N/A</div><div class="c l" style="left:1376px;width:90.5px">N/A</div><div class="ind rd"><div class="dot" style="background:#fff"></div></div></div><div class="row" style="top:114px"><div class="c" style="left:2px;width:50.5px"></div><div class="c id" style="left:54.5px;width:110.5px">1001161...</div><div class="c" style="left:167px;width:137.5px">参数A</div><div class="c ctr ty" style="left:306.5px;width:110.5px">XR</div><div class="c l" style="left:419px;width:117.6px">5</div><div class="c" style="left:538.6px;width:137.4px">产品型号-1</div><div class="c" style="left:678px;width:138px">产品-01</div><div class="c" style="left:818px;width:137.5px">产线#02</div><div class="c" style="left:957.5px;width:137.5px">乙班</div><div class="c l" style="left:1097px;width:137.5px">N/A</div><div class="c l" style="left:1236.5px;width:137.5px">N/A</div><div class="c l" style="left:1376px;width:90.5px">N/A</div><div class="ind bk"><div class="dot" style="border:2px solid #3c3c3c;background:#fdfdfd"></div></div></div><div class="row" style="top:153px"><div class="c" style="left:2px;width:50.5px"></div><div class="c id" style="left:54.5px;width:110.5px">1001161...</div><div class="c" style="left:167px;width:137.5px">参数A</div><div class="c ctr ty" style="left:306.5px;width:110.5px">XR</div><div class="c l" style="left:419px;width:117.6px">5</div><div class="c" style="left:538.6px;width:137.4px">产品型号-1</div><div class="c" style="left:678px;width:138px">产品-01</div><div class="c" style="left:818px;width:137.5px">产线#01</div><div class="c" style="left:957.5px;width:137.5px">乙班</div><div class="c l" style="left:1097px;width:137.5px">N/A</div><div class="c l" style="left:1236.5px;width:137.5px">N/A</div><div class="c l" style="left:1376px;width:90.5px">N/A</div><div class="ind bk"><div class="dot" style="border:2px solid #3c3c3c;background:#fdfdfd"></div></div></div><div class="row" style="top:192px"><div class="c" style="left:2px;width:50.5px"></div><div class="c id" style="left:54.5px;width:110.5px">1001161...</div><div class="c" style="left:167px;width:137.5px">参数B1</div><div class="c ctr ty" style="left:306.5px;width:110.5px">XS</div><div class="c l" style="left:419px;width:117.6px">5</div><div class="c" style="left:538.6px;width:137.4px">产品型号-1</div><div class="c" style="left:678px;width:138px">产品-01</div><div class="c" style="left:818px;width:137.5px">产线#01</div><div class="c" style="left:957.5px;width:137.5px">甲班</div><div class="c l" style="left:1097px;width:137.5px">N/A</div><div class="c l" style="left:1236.5px;width:137.5px">N/A</div><div class="c l" style="left:1376px;width:90.5px">N/A</div><div class="ind rd"><div class="dot" style="background:#fff"></div></div></div><div class="row" style="top:231px"><div class="c" style="left:2px;width:50.5px"></div><div class="c id" style="left:54.5px;width:110.5px">1001161...</div><div class="c" style="left:167px;width:137.5px">参数B2</div><div class="c ctr ty" style="left:306.5px;width:110.5px">XS</div><div class="c l" style="left:419px;width:117.6px">5</div><div class="c" style="left:538.6px;width:137.4px">产品型号-1</div><div class="c" style="left:678px;width:138px">产品-01</div><div class="c" style="left:818px;width:137.5px">产线#01</div><div class="c" style="left:957.5px;width:137.5px">甲班</div><div class="c l" style="left:1097px;width:137.5px">N/A</div><div class="c l" style="left:1236.5px;width:137.5px">N/A</div><div class="c l" style="left:1376px;width:90.5px">N/A</div><div class="ind rd"><div class="dot" style="background:#fff"></div></div></div><div class="row" style="top:270px"><div class="c" style="left:2px;width:50.5px"></div><div class="c id" style="left:54.5px;width:110.5px">1001161...</div><div class="c" style="left:167px;width:137.5px">参数C1</div><div class="c ctr ty" style="left:306.5px;width:110.5px">IMR</div><div class="c l" style="left:419px;width:117.6px">1</div><div class="c" style="left:538.6px;width:137.4px">产品型号-1</div><div class="c" style="left:678px;width:138px">产品-01</div><div class="c" style="left:818px;width:137.5px">产线#01</div><div class="c l" style="left:957.5px;width:137.5px">N/A</div><div class="c l" style="left:1097px;width:137.5px">N/A</div><div class="c l" style="left:1236.5px;width:137.5px">N/A</div><div class="c l" style="left:1376px;width:90.5px">N/A</div><div class="ind bk"><div class="dot" style="border:2px solid #3c3c3c;background:#fdfdfd"></div></div></div><div class="row" style="top:309px"><div class="c" style="left:2px;width:50.5px"></div><div class="c id" style="left:54.5px;width:110.5px">1001161...</div><div class="c" style="left:167px;width:137.5px">参数D</div><div class="c ctr ty" style="left:306.5px;width:110.5px">XR</div><div class="c l" style="left:419px;width:117.6px">3</div><div class="c" style="left:538.6px;width:137.4px">产品型号-1</div><div class="c" style="left:678px;width:138px">产品-01</div><div class="c" style="left:818px;width:137.5px">产线#01</div><div class="c" style="left:957.5px;width:137.5px">乙班</div><div class="c l" style="left:1097px;width:137.5px">N/A</div><div class="c l" style="left:1236.5px;width:137.5px">N/A</div><div class="c" style="left:1376px;width:90.5px">A客户</div><div class="ind bk"><div class="dot" style="border:2px solid #3c3c3c;background:#fdfdfd"></div></div></div><div class="row" style="top:348px"><div class="c" style="left:2px;width:50.5px"></div><div class="c id" style="left:54.5px;width:110.5px">1001161...</div><div class="c" style="left:167px;width:137.5px">参数D</div><div class="c ctr ty" style="left:306.5px;width:110.5px">XR</div><div class="c l" style="left:419px;width:117.6px">3</div><div class="c" style="left:538.6px;width:137.4px">产品型号-1</div><div class="c" style="left:678px;width:138px">产品-01</div><div class="c" style="left:818px;width:137.5px">产线#01</div><div class="c" style="left:957.5px;width:137.5px">甲班</div><div class="c l" style="left:1097px;width:137.5px">N/A</div><div class="c l" style="left:1236.5px;width:137.5px">N/A</div><div class="c" style="left:1376px;width:90.5px">A客户</div><div class="ind rd"><div class="dot" style="background:#fff"></div></div></div><div class="row" style="top:387px"><div class="c" style="left:2px;width:50.5px"></div><div class="c id" style="left:54.5px;width:110.5px">1001161...</div><div class="c" style="left:167px;width:137.5px">参数D</div><div class="c ctr ty" style="left:306.5px;width:110.5px">XR</div><div class="c l" style="left:419px;width:117.6px">3</div><div class="c" style="left:538.6px;width:137.4px">产品型号-1</div><div class="c" style="left:678px;width:138px">产品-01</div><div class="c" style="left:818px;width:137.5px">产线#01</div><div class="c" style="left:957.5px;width:137.5px">丙班</div><div class="c l" style="left:1097px;width:137.5px">N/A</div><div class="c l" style="left:1236.5px;width:137.5px">N/A</div><div class="c" style="left:1376px;width:90.5px">A客户</div><div class="ind bk"><div class="dot" style="border:2px solid #3c3c3c;background:#fdfdfd"></div></div></div><div class="row" style="top:426px"><div class="c" style="left:2px;width:50.5px"></div><div class="c id" style="left:54.5px;width:110.5px">1001161...</div><div class="c" style="left:167px;width:137.5px">外观检测</div><div class="c ctr ty" style="left:306.5px;width:110.5px">P</div><div class="c l" style="left:419px;width:117.6px">N/A</div><div class="c" style="left:538.6px;width:137.4px">产品型号-1</div><div class="c" style="left:678px;width:138px">产品-01</div><div class="c" style="left:818px;width:137.5px">产线#01</div><div class="c l" style="left:957.5px;width:137.5px">N/A</div><div class="c l" style="left:1097px;width:137.5px">N/A</div><div class="c l" style="left:1236.5px;width:137.5px">N/A</div><div class="c l" style="left:1376px;width:90.5px">N/A</div><div class="ind rd"><div class="dot" style="background:#fff"></div></div></div><div class="row" style="top:465px"><div class="c" style="left:2px;width:50.5px"></div><div class="c id" style="left:54.5px;width:110.5px">1001161...</div><div class="c" style="left:167px;width:137.5px">外观检测</div><div class="c ctr ty" style="left:306.5px;width:110.5px">Y</div><div class="c l" style="left:419px;width:117.6px">N/A</div><div class="c" style="left:538.6px;width:137.4px">产品型号-1</div><div class="c" style="left:678px;width:138px">产品-01</div><div class="c" style="left:818px;width:137.5px">产线#01</div><div class="c" style="left:957.5px;width:137.5px">乙班</div><div class="c l" style="left:1097px;width:137.5px">N/A</div><div class="c l" style="left:1236.5px;width:137.5px">N/A</div><div class="c l" style="left:1376px;width:90.5px">N/A</div><div class="ind rd"><div class="dot" style="border:2px solid #f8c400"></div></div></div><div class="row" style="top:504px"><div class="c" style="left:2px;width:50.5px"></div><div class="c id" style="left:54.5px;width:110.5px">1001161...</div><div class="c" style="left:167px;width:137.5px">外观检测</div><div class="c ctr ty" style="left:306.5px;width:110.5px">Y</div><div class="c l" style="left:419px;width:117.6px">N/A</div><div class="c" style="left:538.6px;width:137.4px">产品型号-1</div><div class="c" style="left:678px;width:138px">产品-01</div><div class="c" style="left:818px;width:137.5px">产线#01</div><div class="c" style="left:957.5px;width:137.5px">甲班</div><div class="c l" style="left:1097px;width:137.5px">N/A</div><div class="c l" style="left:1236.5px;width:137.5px">N/A</div><div class="c l" style="left:1376px;width:90.5px">N/A</div><div class="ind rd"><div class="dot" style="border:2px solid #f8c400"></div></div></div><div style="left:1468px;top:36px;width:13px;height:517px;background:#f1f1f3"></div><div style="left:1476px;top:62px;width:5px;height:124px;background:#6e6e6e;border-radius:3px 0 0 3px"></div><svg style="left:1470px;top:45px" width="11" height="8"><path d="M2 7l5-6l5 6z" fill="#666"/></svg><svg style="left:1470px;top:510.5px" width="11" height="8"><path d="M2 1l5 6l5-6z" fill="#666"/></svg></div>
<div id="hscroll"><div style="left:28px;top:12px;width:758px;height:3px;background:#7d7d7d;border-radius:2px"></div></div>
<div id="countbar"><span style="left:4px;top:11px;font-size:18px;line-height:26px">控制图数量：44</span><div class="pg" style="left:979px"><svg style="left:8px;top:5px" width="22" height="20"><path d="M3.5 2v16" stroke="#4a84dc" stroke-width="3.2"/><path d="M18 2.5l-9.5 7.5l9.5 7.5z" fill="#a9cbf2" stroke="#3a74d0" stroke-width="1.5"/></svg></div><div class="pg" style="left:1022px"><svg style="left:8px;top:5px" width="22" height="20"><path d="M16 2.5l-9.5 7.5l9.5 7.5z" fill="#a9cbf2" stroke="#3a74d0" stroke-width="1.5"/></svg></div><div class="pg" style="left:1155px"><svg style="left:8px;top:5px" width="22" height="20"><path d="M6 2.5l9.5 7.5l-9.5 7.5z" fill="#a9cbf2" stroke="#3a74d0" stroke-width="1.5"/></svg></div><div class="pg" style="left:1198px"><svg style="left:8px;top:5px" width="22" height="20"><path d="M18.5 2v16" stroke="#4a84dc" stroke-width="3.2"/><path d="M4 2.5l9.5 7.5l-9.5 7.5z" fill="#a9cbf2" stroke="#3a74d0" stroke-width="1.5"/></svg></div><span style="left:1094px;top:11px;font-size:18.5px;letter-spacing:0.3px;line-height:26px">1/1</span><span style="left:1260px;top:11px;font-size:18px;line-height:26px">跳转至：</span><div style="left:1338px;top:10px;width:83px;height:31px;background:#fdfdfd;border:1px solid #d8e0ec;border-radius:3px"><span style="left:6px;top:3px;font-size:17.5px;line-height:26px">1</span><svg style="left:62px;top:11px" width="14" height="9"><path d="M1 1.5l6 6l6-6" fill="none" stroke="#555" stroke-width="1.3"/></svg></div></div>
<div id="leftbot"><div style="left:4px;top:9px;width:157px;height:31px;background:#fdfdfd;border-bottom:2px solid #b9b9b9;border-radius:2px"></div><div style="left:174px;top:14.5px;width:21px;height:21px;background:#b9b9b9;border:1px solid #8f8f8f;border-radius:2px"><svg style="left:3px;top:3px" width="14" height="14"><path d="M7 1l6 6.5h-3.5v5.5h-5v-5.5h-3.5z" fill="#fff"/></svg></div><div style="left:205px;top:14.5px;width:21px;height:21px;background:#b9b9b9;border:1px solid #8f8f8f;border-radius:2px"><svg style="left:3px;top:3px" width="14" height="14"><path d="M7 13l6-6.5h-3.5v-5.5h-5v5.5h-3.5z" fill="#fff"/></svg></div></div>
<div id="legend"><div style="left:10px;top:9px;width:30px;height:30px;border:1.5px solid #222;background:#fdfdfd"></div><span class="lt" style="left:47px">历史点未失控</span><div style="left:317px;top:9px;width:30px;height:30px;background:#fe0000"></div><span class="lt" style="left:353px">历史点未处理</span><div style="left:625px;top:9px;width:30px;height:30px;background:#0a7a25"></div><span class="lt" style="left:661px">历史点已处理</span><div style="left:937px;top:16px;width:18px;height:18px;border-radius:50%;border:1.6px solid #444;background:#fdfdfd"></div><span class="lt" style="left:968px">最后点未失控</span><div style="left:1246px;top:16px;width:18px;height:18px;border-radius:50%;background:#fe0000"></div><span class="lt" style="left:1276px">最后点未处理</span><div style="left:1552px;top:16px;width:18px;height:18px;border-radius:50%;background:#0a7a25"></div><span class="lt" style="left:1585px">最后点已处理</span></div>
<div id="status"><span class="st la" style="left:93px">admin</span><div style="left:239px;top:4px;width:1px;height:24px;background:#d5d5d5"></div><span class="st" style="left:330px">试用版</span><div style="left:480px;top:4px;width:1px;height:24px;background:#d5d5d5"></div><span class="st" style="left:515px">当前版本:</span><span class="st" style="left:599px;font-size:18.5px;letter-spacing:0.5px">4.8.4.996</span><a class="st" style="left:711px;color:#f00;text-decoration:underline">系统功能操作视频演示教学</a><a class="st" style="left:963px;color:#f00;text-decoration:underline">问题反馈</a><span class="st la" style="left:1203px;letter-spacing:0.27px">Quick data collection and smart data analysis</span></div>
<div style="left:0;top:941.5px;width:1743px;height:1.5px;background:#1c1c1c"></div>
</body></html>
